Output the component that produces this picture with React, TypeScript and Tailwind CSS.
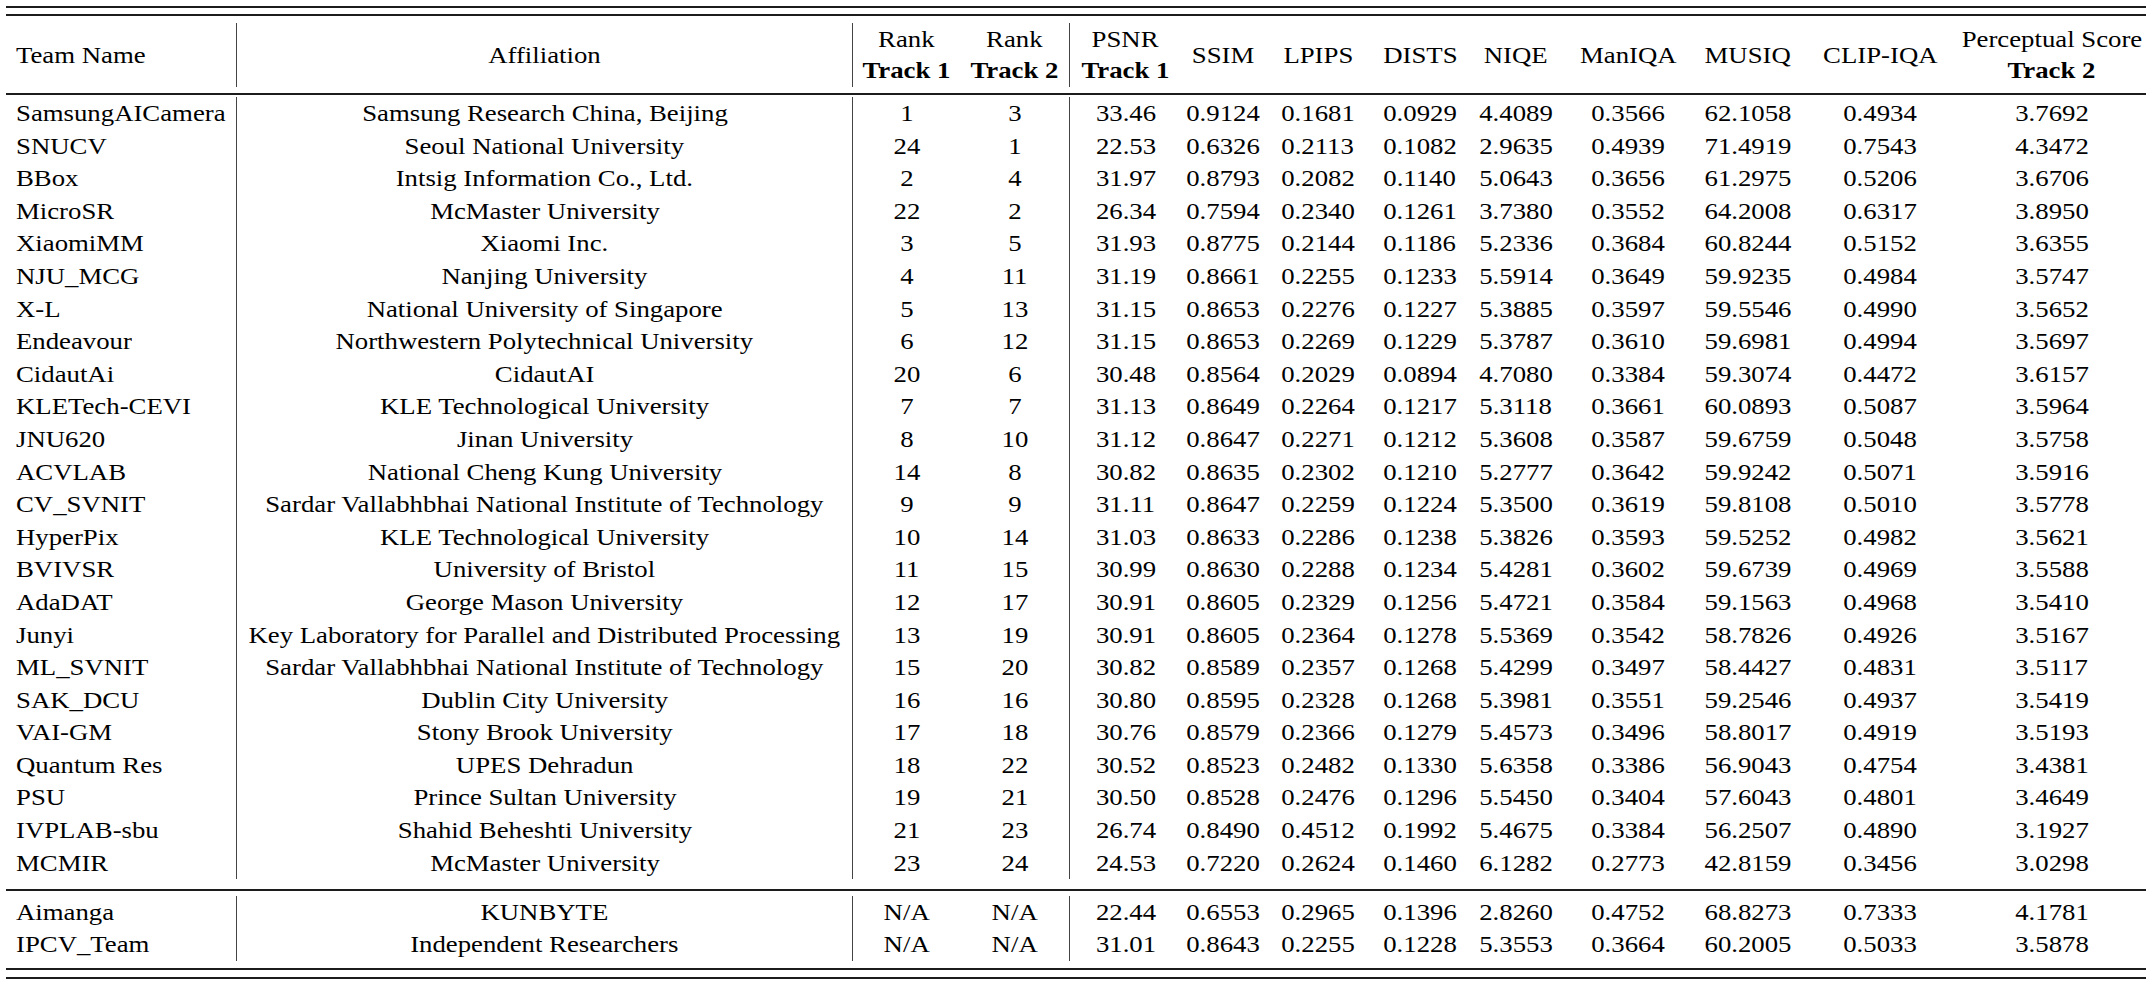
import React from 'react';

type Row = [string, string, string, string, ...string[]];

const rows: Row[] = [
  ['SamsungAICamera', 'Samsung Research China, Beijing', '1', '3', '33.46', '0.9124', '0.1681', '0.0929', '4.4089', '0.3566', '62.1058', '0.4934', '3.7692'],
  ['SNUCV', 'Seoul National University', '24', '1', '22.53', '0.6326', '0.2113', '0.1082', '2.9635', '0.4939', '71.4919', '0.7543', '4.3472'],
  ['BBox', 'Intsig Information Co., Ltd.', '2', '4', '31.97', '0.8793', '0.2082', '0.1140', '5.0643', '0.3656', '61.2975', '0.5206', '3.6706'],
  ['MicroSR', 'McMaster University', '22', '2', '26.34', '0.7594', '0.2340', '0.1261', '3.7380', '0.3552', '64.2008', '0.6317', '3.8950'],
  ['XiaomiMM', 'Xiaomi Inc.', '3', '5', '31.93', '0.8775', '0.2144', '0.1186', '5.2336', '0.3684', '60.8244', '0.5152', '3.6355'],
  ['NJU_MCG', 'Nanjing University', '4', '11', '31.19', '0.8661', '0.2255', '0.1233', '5.5914', '0.3649', '59.9235', '0.4984', '3.5747'],
  ['X-L', 'National University of Singapore', '5', '13', '31.15', '0.8653', '0.2276', '0.1227', '5.3885', '0.3597', '59.5546', '0.4990', '3.5652'],
  ['Endeavour', 'Northwestern Polytechnical University', '6', '12', '31.15', '0.8653', '0.2269', '0.1229', '5.3787', '0.3610', '59.6981', '0.4994', '3.5697'],
  ['CidautAi', 'CidautAI', '20', '6', '30.48', '0.8564', '0.2029', '0.0894', '4.7080', '0.3384', '59.3074', '0.4472', '3.6157'],
  ['KLETech-CEVI', 'KLE Technological University', '7', '7', '31.13', '0.8649', '0.2264', '0.1217', '5.3118', '0.3661', '60.0893', '0.5087', '3.5964'],
  ['JNU620', 'Jinan University', '8', '10', '31.12', '0.8647', '0.2271', '0.1212', '5.3608', '0.3587', '59.6759', '0.5048', '3.5758'],
  ['ACVLAB', 'National Cheng Kung University', '14', '8', '30.82', '0.8635', '0.2302', '0.1210', '5.2777', '0.3642', '59.9242', '0.5071', '3.5916'],
  ['CV_SVNIT', 'Sardar Vallabhbhai National Institute of Technology', '9', '9', '31.11', '0.8647', '0.2259', '0.1224', '5.3500', '0.3619', '59.8108', '0.5010', '3.5778'],
  ['HyperPix', 'KLE Technological University', '10', '14', '31.03', '0.8633', '0.2286', '0.1238', '5.3826', '0.3593', '59.5252', '0.4982', '3.5621'],
  ['BVIVSR', 'University of Bristol', '11', '15', '30.99', '0.8630', '0.2288', '0.1234', '5.4281', '0.3602', '59.6739', '0.4969', '3.5588'],
  ['AdaDAT', 'George Mason University', '12', '17', '30.91', '0.8605', '0.2329', '0.1256', '5.4721', '0.3584', '59.1563', '0.4968', '3.5410'],
  ['Junyi', 'Key Laboratory for Parallel and Distributed Processing', '13', '19', '30.91', '0.8605', '0.2364', '0.1278', '5.5369', '0.3542', '58.7826', '0.4926', '3.5167'],
  ['ML_SVNIT', 'Sardar Vallabhbhai National Institute of Technology', '15', '20', '30.82', '0.8589', '0.2357', '0.1268', '5.4299', '0.3497', '58.4427', '0.4831', '3.5117'],
  ['SAK_DCU', 'Dublin City University', '16', '16', '30.80', '0.8595', '0.2328', '0.1268', '5.3981', '0.3551', '59.2546', '0.4937', '3.5419'],
  ['VAI-GM', 'Stony Brook University', '17', '18', '30.76', '0.8579', '0.2366', '0.1279', '5.4573', '0.3496', '58.8017', '0.4919', '3.5193'],
  ['Quantum Res', 'UPES Dehradun', '18', '22', '30.52', '0.8523', '0.2482', '0.1330', '5.6358', '0.3386', '56.9043', '0.4754', '3.4381'],
  ['PSU', 'Prince Sultan University', '19', '21', '30.50', '0.8528', '0.2476', '0.1296', '5.5450', '0.3404', '57.6043', '0.4801', '3.4649'],
  ['IVPLAB-sbu', 'Shahid Beheshti University', '21', '23', '26.74', '0.8490', '0.4512', '0.1992', '5.4675', '0.3384', '56.2507', '0.4890', '3.1927'],
  ['MCMIR', 'McMaster University', '23', '24', '24.53', '0.7220', '0.2624', '0.1460', '6.1282', '0.2773', '42.8159', '0.3456', '3.0298'],
];

const extra: Row[] = [
  ['Aimanga', 'KUNBYTE', 'N/A', 'N/A', '22.44', '0.6553', '0.2965', '0.1396', '2.8260', '0.4752', '68.8273', '0.7333', '4.1781'],
  ['IPCV_Team', 'Independent Researchers', 'N/A', 'N/A', '31.01', '0.8643', '0.2255', '0.1228', '5.3553', '0.3664', '60.2005', '0.5033', '3.5878'],
];

// column widths measured off the reference; the "|" rules sit after cols 0, 1 and 3
const cols = [
  'w-[230px] pl-[10px] justify-start',
  'w-[616px] justify-center border-l border-[#444]',
  'w-[108px] justify-center border-l border-[#444]',
  'w-[109px] justify-center',
  'w-[112px] justify-center border-l border-[#444]',
  'w-[84px] justify-center',
  'w-[106px] justify-center',
  'w-[98px] justify-center',
  'w-[94px] justify-center',
  'w-[130px] justify-center',
  'w-[110px] justify-center',
  'w-[154px] justify-center',
  'w-[189px] justify-center',
];

// the scan is a bit wider than real Times, so the glyphs get stretched sideways
function Txt({ children, left, bold }: { children: React.ReactNode; left?: boolean; bold?: boolean }) {
  return (
    <span className={`inline-block whitespace-nowrap scale-x-[1.115] ${left ? 'origin-left' : 'origin-center'} ${bold ? 'font-bold' : ''}`}>
      {children}
    </span>
  );
}

function Rule() {
  return <div className="h-[2px] bg-[#1c1c1c]" />;
}

function DataRow({ r }: { r: Row }) {
  return (
    <div className="flex h-[32.6px] leading-[32.6px]">
      {r.map((v, i) => (
        <div key={i} className={`${cols[i]} shrink-0 flex`}>
          <Txt left={i === 0}>{v}</Txt>
        </div>
      ))}
    </div>
  );
}

export default function App() {
  const heads: [string, string?][] = [
    ['Team Name'], ['Affiliation'], ['Rank', 'Track 1'], ['Rank', 'Track 2'], ['PSNR', 'Track 1'],
    ['SSIM'], ['LPIPS'], ['DISTS'], ['NIQE'], ['ManIQA'], ['MUSIQ'], ['CLIP-IQA'], ['Perceptual Score', 'Track 2'],
  ];

  return (
    <div className="w-[2156px] h-[991px] bg-white text-black text-[24px] font-[family-name:Liberation_Serif,serif]">
      <div className="ml-[6px] w-[2140px] pt-[6px]">
        <Rule />
        <div className="h-[6px]" />
        <Rule />

        {/* header */}
        <div className="pt-[7px] pb-[6px]">
          <div className="flex h-[64px]">
            {heads.map(([t, b], i) => (
              <div key={i} className={`${cols[i]} shrink-0 flex items-center`}>
                <div className={`flex flex-col leading-[30.6px] ${i === 0 ? 'items-start' : 'items-center'}`}>
                  <Txt left={i === 0}>{t}</Txt>
                  {b && <Txt bold>{b}</Txt>}
                </div>
              </div>
            ))}
          </div>
        </div>
        <Rule />

        {/* ranked teams */}
        <div className="pt-[2px] pb-[10px]">
          {rows.map((r, i) => <DataRow key={i} r={r} />)}
        </div>
        <Rule />

        {/* unranked */}
        <div className="pt-[4.6px] pb-[7px]">
          {extra.map((r, i) => <DataRow key={i} r={r} />)}
        </div>
        <Rule />
        <div className="h-[7px]" />
        <Rule />
      </div>
    </div>
  );
}
